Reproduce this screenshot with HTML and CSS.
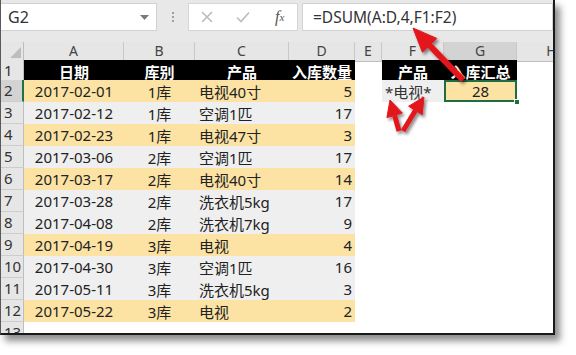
FILE: index.html
```html
<!DOCTYPE html>
<html lang="zh-CN">
<head>
<meta charset="utf-8">
<link rel="stylesheet" href="styles.css">
</head>
<body>
<div class="page">
  <div class="frame">
    <div class="fbar">
      <div class="namebox"><span>G2</span><svg class="caret" width="9" height="5" viewBox="0 0 9 5"><path d="M0 0H9L4.5 5Z" fill="#7a7a7a"/></svg></div>
      <div class="dots"><i></i><i></i><i></i></div>
      <div class="btns">
        <span class="slot"><svg width="12" height="12" viewBox="0 0 12 12"><path d="M1 1L11 11M11 1L1 11" stroke="#bcbcbc" stroke-width="1.6"/></svg></span>
        <span class="slot"><svg width="14" height="12" viewBox="0 0 14 12"><path d="M1 6.5L5 10.5L13 1.5" stroke="#bcbcbc" stroke-width="1.6" fill="none"/></svg></span>
        <span class="slot fx">f<small>x</small></span>
      </div>
      <div class="formula">=DSUM(A:D,4,F1:F2)</div>
    </div>
    <div class="sheet">
      <div class="row hdr">
        <div class="rh corner"><svg width="11" height="11" viewBox="0 0 11 11"><path d="M11 0V11H0Z" fill="#bdbdbd"/></svg></div>
        <div class="ch">A</div><div class="ch">B</div><div class="ch">C</div><div class="ch">D</div><div class="ch">E</div><div class="ch">F</div><div class="ch chsel">G</div><div class="ch">H</div>
      </div>
      <div class="row r1">
        <div class="rh">1</div>
        <div class="c k">日期</div><div class="c k">库别</div><div class="c k">产品</div><div class="c k">入库数量</div><div class="c"></div><div class="c k">产品</div><div class="c k">入库汇总</div><div class="c"></div>
      </div>
      <div class="row">
        <div class="rh rhsel">2</div>
        <div class="c y ctr">2017-02-01</div><div class="c y ctr">1库</div><div class="c y lft">电视40寸</div><div class="c y rgt">5</div><div class="c"></div><div class="c g lft crit">*电视*</div><div class="c y ctr sel">28<span class="handle"></span></div><div class="c"></div>
      </div>
      <div class="row">
        <div class="rh">3</div>
        <div class="c g ctr">2017-02-12</div><div class="c g ctr">1库</div><div class="c g lft">空调1匹</div><div class="c g rgt">17</div><div class="c"></div><div class="c"></div><div class="c"></div><div class="c"></div>
      </div>
      <div class="row">
        <div class="rh">4</div>
        <div class="c y ctr">2017-02-23</div><div class="c y ctr">1库</div><div class="c y lft">电视47寸</div><div class="c y rgt">3</div><div class="c"></div><div class="c"></div><div class="c"></div><div class="c"></div>
      </div>
      <div class="row">
        <div class="rh">5</div>
        <div class="c g ctr">2017-03-06</div><div class="c g ctr">2库</div><div class="c g lft">空调1匹</div><div class="c g rgt">17</div><div class="c"></div><div class="c"></div><div class="c"></div><div class="c"></div>
      </div>
      <div class="row">
        <div class="rh">6</div>
        <div class="c y ctr">2017-03-17</div><div class="c y ctr">2库</div><div class="c y lft">电视40寸</div><div class="c y rgt">14</div><div class="c"></div><div class="c"></div><div class="c"></div><div class="c"></div>
      </div>
      <div class="row">
        <div class="rh">7</div>
        <div class="c g ctr">2017-03-28</div><div class="c g ctr">2库</div><div class="c g lft">洗衣机5kg</div><div class="c g rgt">17</div><div class="c"></div><div class="c"></div><div class="c"></div><div class="c"></div>
      </div>
      <div class="row">
        <div class="rh">8</div>
        <div class="c g ctr">2017-04-08</div><div class="c g ctr">2库</div><div class="c g lft">洗衣机7kg</div><div class="c g rgt">9</div><div class="c"></div><div class="c"></div><div class="c"></div><div class="c"></div>
      </div>
      <div class="row">
        <div class="rh">9</div>
        <div class="c y ctr">2017-04-19</div><div class="c y ctr">3库</div><div class="c y lft">电视</div><div class="c y rgt">4</div><div class="c"></div><div class="c"></div><div class="c"></div><div class="c"></div>
      </div>
      <div class="row">
        <div class="rh">10</div>
        <div class="c g ctr">2017-04-30</div><div class="c g ctr">3库</div><div class="c g lft">空调1匹</div><div class="c g rgt">16</div><div class="c"></div><div class="c"></div><div class="c"></div><div class="c"></div>
      </div>
      <div class="row">
        <div class="rh">11</div>
        <div class="c g ctr">2017-05-11</div><div class="c g ctr">3库</div><div class="c g lft">洗衣机5kg</div><div class="c g rgt">3</div><div class="c"></div><div class="c"></div><div class="c"></div><div class="c"></div>
      </div>
      <div class="row">
        <div class="rh">12</div>
        <div class="c y ctr">2017-05-22</div><div class="c y ctr">3库</div><div class="c y lft">电视</div><div class="c y rgt">2</div><div class="c"></div><div class="c"></div><div class="c"></div><div class="c"></div>
      </div>
      <div class="row">
        <div class="rh">13</div>
        <div class="c"></div><div class="c"></div><div class="c"></div><div class="c"></div><div class="c"></div><div class="c"></div><div class="c"></div><div class="c"></div>
      </div>
    </div>
  </div>
  <svg class="arrows" width="576" height="355" viewBox="0 0 576 355">
    <defs>
      <filter id="sh" x="-20%" y="-20%" width="160%" height="160%">
        <feDropShadow dx="2" dy="2.5" stdDeviation="1.6" flood-color="#000" flood-opacity="0.45"/>
      </filter>
    </defs>
    <g filter="url(#sh)" fill="#e3161e" stroke="#e3161e" stroke-linejoin="round">
      <line x1="463" y1="80" x2="429.6" y2="45.3" stroke-width="6"/>
      <polygon points="413,28 436.8,38.4 422.4,52.2" stroke-width="1"/>
      <line x1="399" y1="131" x2="394.6" y2="115.3" stroke-width="5"/>
      <polygon points="390,100 402.3,113 386.9,117.6" stroke-width="1"/>
      <line x1="403" y1="131" x2="415.4" y2="110.5" stroke-width="5"/>
      <polygon points="424,97 422.2,114.8 408.6,106.2" stroke-width="1"/>
    </g>
  </svg>
</div>
</body>
</html>
```

FILE: styles.css
```css
* { box-sizing: border-box; }
body {
  margin: 0;
  background: #fff;
  font-family: "Noto Sans", "Noto Sans CJK SC", sans-serif;
}
.page {
  position: relative;
  width: 576px;
  height: 355px;
}
.frame {
  width: 555px;
  height: 335px;
  border-left: 1px solid #5a5a5a;
  border-right: 2px solid #1a1a1a;
  border-bottom: 2px solid #1a1a1a;
  box-shadow: 5px 6px 7px rgba(0, 0, 0, 0.45);
  overflow: hidden;
  background: #fff;
}
.fbar {
  height: 42px;
  background: #e8e8e8;
  display: flex;
  align-items: flex-start;
  padding-top: 3px;
}
.namebox {
  width: 156px;
  height: 28px;
  background: #fff;
  border: 1px solid #d2d2d2;
  border-left: none;
  display: flex;
  align-items: center;
  padding-left: 7px;
  font-size: 16px;
  color: #333;
}
.caret { margin-left: auto; margin-right: 7px; }
.dots {
  margin-left: 15px;
  width: 3px;
  height: 28px;
  display: flex;
  flex-direction: column;
  justify-content: center;
  gap: 2px;
}
.dots i {
  display: block;
  width: 2px;
  height: 2px;
  background: #a0a0a0;
}
.btns {
  margin-left: 13px;
  width: 110px;
  height: 28px;
  background: #fff;
  border: 1px solid #d6d6d6;
  display: flex;
  align-items: center;
}
.slot {
  width: 36px;
  display: flex;
  justify-content: center;
  align-items: center;
}
.slot:first-child { width: 38px; }
.fx {
  font-family: "Liberation Serif", serif;
  font-style: italic;
  font-size: 16px;
  color: #555;
  margin-left: 2px;
}
.fx small { font-size: 11px; }
.formula {
  margin-left: 4px;
  width: 251px;
  height: 28px;
  background: #fff;
  border: 1px solid #d2d2d2;
  padding-left: 10px;
  font-size: 15.5px;
  line-height: 26px;
  color: #333;
}
.row {
  display: grid;
  grid-template-columns: 23px 100px 71px 94px 66px 27px 62px 73px 70px;
  height: 22px;
  font-size: 15px;
  color: #222;
}
.row.hdr { height: 18px; }
.row.r1 { height: 20px; }
.rh {
  background: #e6e6e6;
  border-right: 1px solid #bdbdbd;
  border-bottom: 1px solid #cdcdcd;
  padding-left: 3px;
  color: #333;
  font-size: 15px;
  line-height: 21px;
}
.rhsel {
  background: #d3d3d3;
  border-right: 2px solid #217346;
}
.corner {
  display: flex;
  align-items: flex-end;
  justify-content: flex-end;
  padding: 0 2px 3px 0;
  border-bottom: 1px solid #bdbdbd;
}
.ch {
  background: #e6e6e6;
  border-right: 1px solid #c8c8c8;
  border-bottom: 1px solid #bdbdbd;
  text-align: center;
  font-size: 14px;
  line-height: 18px;
  color: #444;
}
.chsel {
  background: #d3d3d3;
  border-bottom: 2px solid #217346;
}
.c {
  display: flex;
  align-items: center;
  white-space: nowrap;
  position: relative;
}
.k {
  background: #000;
  color: #fff;
  font-weight: 700;
  justify-content: center;
  font-size: 15px;
}
.y { background: #fce3a4; }
.g { background: #efefef; }
.ctr { justify-content: center; }
.lft { padding-left: 4px; }
.rgt { justify-content: flex-end; padding-right: 3px; }
.crit { padding-left: 3px; color: #333; }
.sel { box-shadow: inset 0 0 0 2px #1f6e43; }
.handle {
  position: absolute;
  right: -3px;
  bottom: -3px;
  width: 6px;
  height: 6px;
  background: #1f6e43;
  border: 1px solid #fff;
  z-index: 2;
}
.arrows {
  position: absolute;
  left: 0;
  top: 0;
  pointer-events: none;
}
```
